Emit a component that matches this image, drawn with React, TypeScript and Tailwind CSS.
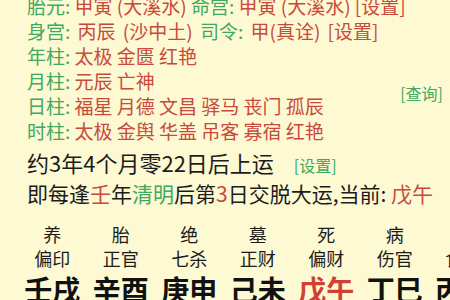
const grid = [
  { stage: '养', god: '偏印', pillar: '壬戌' },
  { stage: '胎', god: '正官', pillar: '辛酉' },
  { stage: '绝', god: '七杀', pillar: '庚申' },
  { stage: '墓', god: '正财', pillar: '己未' },
  { stage: '死', god: '偏财', pillar: '戊午', current: true },
  { stage: '病', god: '伤官', pillar: '丁巳' },
  { stage: '衰', god: '食神', pillar: '丙辰' },
];

const shensha = [
  { label: '年柱', value: '太极 金匮 红艳' },
  { label: '月柱', value: '元辰 亡神' },
];

function Label({ children }: { children: React.ReactNode }) {
  return <span className="text-[#41a862]">{children}: </span>;
}

export default function App() {
  return (
    <div
      className="w-[450px] h-[300px] overflow-hidden bg-[#fcf9d3] text-[#1c1c1c]"
      style={{ fontFamily: '"Noto Sans CJK SC", "Noto Sans", sans-serif' }}
    >
      <div className="-mt-[7px] pl-[27px] pr-[7px] text-[19px] leading-[25px] text-[#c94a3c]">
        <div className="whitespace-nowrap">
          <Label>胎元</Label>甲寅 (大溪水) <Label>命宫</Label>甲寅 (大溪水) [设置]
        </div>
        <div className="whitespace-nowrap [word-spacing:3px]">
          <Label>身宫</Label>丙辰 (沙中土) <Label>司令</Label>甲(真诠) [设置]
        </div>
        {shensha.map((s) => (
          <div key={s.label} className="whitespace-nowrap">
            <Label>{s.label}</Label>
            {s.value}
          </div>
        ))}
        <div className="flex items-start justify-between whitespace-nowrap">
          <div>
            <Label>日柱</Label>福星 月德 文昌 驿马 丧门 孤辰
          </div>
          <span className="-mt-[12px] text-[16px] text-[#41a862]">[查询]</span>
        </div>
        <div className="whitespace-nowrap">
          <Label>时柱</Label>太极 金舆 华盖 吊客 寡宿 红艳
        </div>
      </div>

      <div className="mt-[5px] pl-[27px] whitespace-nowrap text-[22px] leading-[28px]">
        约3年4个月零22日后上运<span className="ml-[20px] text-[16px] text-[#41a862]">[设置]</span>
      </div>
      <div className="pl-[27px] whitespace-nowrap text-[21px] leading-[28px]">
        即每逢<span className="text-[#c94a3c]">壬</span>年<span className="text-[#41a862]">清明</span>后第
        <span className="text-[#c94a3c]">3</span>日交脱大运,当前: <span className="text-[#c94a3c]">戊午</span>
      </div>

      <div className="mt-[15px] ml-[18px] flex">
        {grid.map((g) => (
          <div key={g.pillar} className="w-[68.5px] shrink-0 flex flex-col items-center whitespace-nowrap">
            <div className="text-[18px] leading-[24px]">{g.stage}</div>
            <div className="text-[18px] leading-[24px]">{g.god}</div>
            <div
              className={`mt-[1px] text-[28px] leading-[36px] font-bold ${g.current ? 'text-[#d2402f]' : 'text-[#111]'}`}
            >
              {g.pillar}
            </div>
          </div>
        ))}
      </div>
    </div>
  );
}
